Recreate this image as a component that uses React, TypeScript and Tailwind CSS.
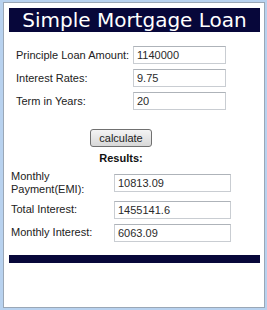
import React from "react";

const inputRows = [
  { label: "Principle Loan Amount:", value: "1140000" },
  { label: "Interest Rates:", value: "9.75" },
  { label: "Term in Years:", value: "20" },
];

const resultRows = [
  { label: ["Monthly", "Payment(EMI):"], value: "10813.09" },
  { label: ["Total Interest:"], value: "1455141.6" },
  { label: ["Monthly Interest:"], value: "6063.09" },
];

function Field({ value, width }: { value: string; width: string }) {
  return (
    <div
      className={`${width} h-[18px] border border-[#c9cdd2] border-t-[#aeb3b9] bg-white pl-[3px] text-[11px] leading-[16px] text-[#2a2a2a]`}
    >
      {value}
    </div>
  );
}

export default function App() {
  return (
    <div
      className="w-[267px] h-[310px] bg-[#b8d2ef] pt-[2px] pl-[3px] pr-[2px] pb-[2px]"
      style={{ fontFamily: '"Liberation Sans", Arial, sans-serif' }}
    >
      <div className="h-full border border-[#9aa7b6] bg-white pt-[5px] pl-[5px] pr-[4px]">
        {/* Title */}
        <div
          className="h-[24px] bg-[#07073a] text-white text-[20px] leading-[24px] text-center"
          style={{ fontFamily: '"DejaVu Sans", Verdana, sans-serif' }}
        >
          Simple Mortgage Loan
        </div>

        {/* Inputs */}
        <div className="mt-[14px] pl-[7px] flex flex-col gap-[5px]">
          {inputRows.map((r) => (
            <div key={r.label} className="flex items-center">
              <div className="w-[117px] text-[11px] text-[#222]">{r.label}</div>
              <Field value={r.value} width="w-[93px]" />
            </div>
          ))}
        </div>

        {/* Results */}
        <div className="w-[220px] ml-[2px] mt-[19px] flex flex-col items-center">
          <button className="w-[62px] h-[18px] rounded-[3px] border border-[#707070] bg-gradient-to-b from-[#f4f4f4] to-[#d8d8d8] text-[11px] leading-[16px] text-[#222]">
            calculate
          </button>
          <div className="mt-[3px] text-[11px] font-bold text-[#111]">Results:</div>
        </div>

        <div className="ml-[2px] mt-[3px] flex flex-col gap-[5px]">
          {resultRows.map((r) => (
            <div key={r.value} className="flex items-center">
              <div className="w-[103px] text-[11px] leading-[13px] text-[#222]">
                {r.label.map((l) => (
                  <div key={l}>{l}</div>
                ))}
              </div>
              <Field value={r.value} width="w-[117px]" />
            </div>
          ))}
        </div>

        {/* Footer bar */}
        <div className="mt-[13px] h-[8px] bg-[#07073a]" />
      </div>
    </div>
  );
}
